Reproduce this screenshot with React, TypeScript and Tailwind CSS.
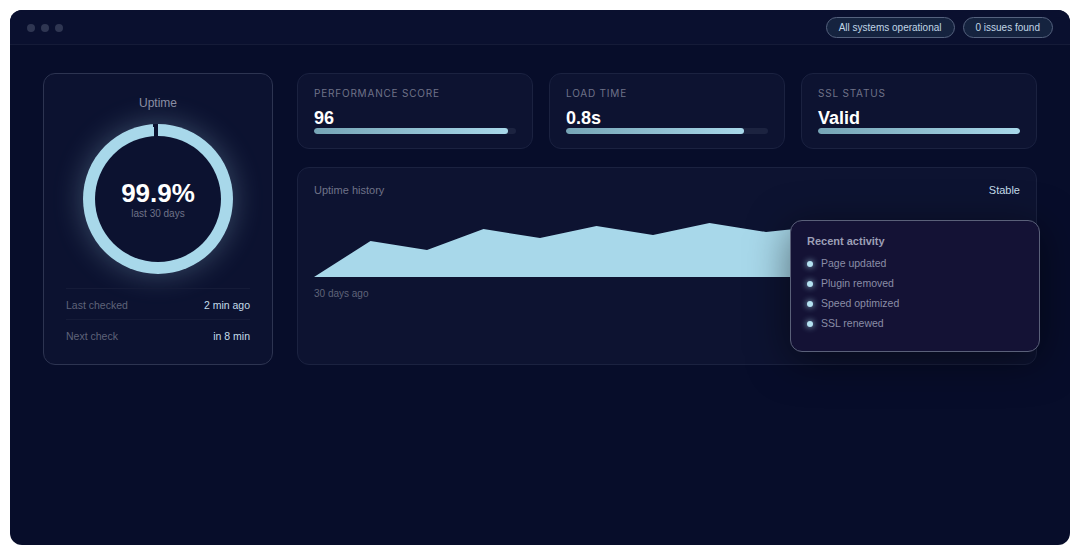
const font = { fontFamily: '"Liberation Sans", Arial, sans-serif' };

const stats = [
  { label: "PERFORMANCE SCORE", value: "96", bar: "w-[96%]" },
  { label: "LOAD TIME", value: "0.8s", bar: "w-[88%]" },
  { label: "SSL STATUS", value: "Valid", bar: "w-full" },
];

const activity = ["Page updated", "Plugin removed", "Speed optimized", "SSL renewed"];

function StatCard({ label, value, bar }: { label: string; value: string; bar: string }) {
  return (
    <div className="flex h-[76px] flex-col rounded-xl border border-[#1b2240] bg-[#0d1331] px-4 pt-[12px]">
      <div className="font-['Inter',sans-serif] text-[10px] leading-[14px] tracking-[0.8px] text-[#6f7288]">{label}</div>
      <div className="mt-[8px] text-[18px] leading-[20px] font-bold text-white">{value}</div>
      <div className="h-[6px] w-full overflow-hidden rounded-full bg-[#1c2340]">
        <div className={`h-full rounded-full bg-gradient-to-r from-[#76a5b6] to-[#a8d8ea] ${bar}`} />
      </div>
    </div>
  );
}

export default function App() {
  return (
    <div className="h-[555px] w-[1080px] bg-white p-[10px]" style={font}>
      <div className="relative h-[535px] w-[1060px] overflow-hidden rounded-xl bg-[#070d2a]">
        <header className="flex h-[35px] items-center justify-between border-b border-[#151b38] bg-[#0a102f] pt-[1px] pr-[17px] pl-[17px]">
          <div className="flex gap-[6px]">
            <span className="size-2 rounded-full bg-[#2f3652]" />
            <span className="size-2 rounded-full bg-[#2f3652]" />
            <span className="size-2 rounded-full bg-[#2f3652]" />
          </div>
          <div className="flex gap-2">
            <span className="flex h-[21px] items-center rounded-full border border-[#55627e] bg-[#15233f] px-3 text-[10px] text-[#c0d6e6]">
              All systems operational
            </span>
            <span className="flex h-[21px] items-center rounded-full border border-[#55627e] bg-[#15233f] px-3 text-[10px] text-[#c0d6e6]">
              0 issues found
            </span>
          </div>
        </header>

        <main className="flex items-start gap-6 pt-[28px] pl-[33px]">
          <section className="flex h-[292px] w-[230px] flex-col items-center rounded-xl border border-[#2d3451] bg-[#0c1230] px-[22px] pt-[22px]">
            <div className="text-xs leading-[14px] text-[#8b8ea3]">Uptime</div>
            <div className="mt-[14px] flex size-[150px] items-center justify-center rounded-full bg-[conic-gradient(#a8d8ea_0%_99%,#0c1230_99%_100%)] shadow-[0_0_30px_rgba(168,216,234,0.3)]">
              <div className="flex size-[126px] flex-col items-center justify-center rounded-full bg-[#0c1230]">
                <div className="text-[26px] leading-[30px] font-bold text-white">99.9%</div>
                <div className="text-[10px] leading-[12px] text-[#6f7288]">last 30 days</div>
              </div>
            </div>
            <div className="mt-[14px] w-full border-t border-[#151b38] pt-[10px] pb-[8px]">
              <div className="flex justify-between text-[10.5px] leading-[12px]">
                <span className="text-[#5f6379]">Last checked</span>
                <span className="text-[#c4dcea]">2 min ago</span>
              </div>
            </div>
            <div className="w-full border-t border-[#151b38] pt-[10px]">
              <div className="flex justify-between text-[10.5px] leading-[12px]">
                <span className="text-[#5f6379]">Next check</span>
                <span className="text-[#c4dcea]">in 8 min</span>
              </div>
            </div>
          </section>

          <div className="flex w-[740px] flex-col gap-[18px]">
            <div className="grid grid-cols-3 gap-4">
              {stats.map((s) => (
                <StatCard key={s.label} {...s} />
              ))}
            </div>
            <section className="h-[198px] rounded-xl border border-[#1b2240] bg-[#0d1331] px-4 pt-[16px]">
              <div className="flex justify-between text-[11px] leading-[13px]">
                <span className="text-[#6f7288]">Uptime history</span>
                <span className="text-[#c4dcea]">Stable</span>
              </div>
              <svg className="mt-[17px] block" width="706" height="64" viewBox="0 0 706 64">
                <path
                  d="M0 63 L56.5 27 L113 36 L169.5 15 L226 24 L282.5 12 L339 21 L395.500 9 L452 18 L508.500 12 L565 21 L621.500 9 L706 15 L706 63 Z"
                  fill="#a8d8ea"
                />
              </svg>
              <div className="mt-[10px] text-[10px] leading-[12px] text-[#5f6379]">30 days ago</div>
            </section>
          </div>
        </main>

        <aside className="absolute top-[210px] left-[780px] h-[132px] w-[250px] rounded-xl border border-[#5a6079] bg-[#141235] px-4 pt-[14px] shadow-[0_8px_40px_rgba(0,0,0,0.5)]">
          <div className="text-[11px] leading-[13px] font-bold text-[#9c9fb6]">Recent activity</div>
          <ul className="mt-[6px]">
            {activity.map((a) => (
              <li key={a} className="flex h-5 items-center gap-2 text-[10.5px] text-[#8a8da6]">
                <span className="size-[6px] rounded-full bg-[#b4e2f2] shadow-[0_0_6px_#a8d8ea]" />
                {a}
              </li>
            ))}
          </ul>
        </aside>
      </div>
    </div>
  );
}
